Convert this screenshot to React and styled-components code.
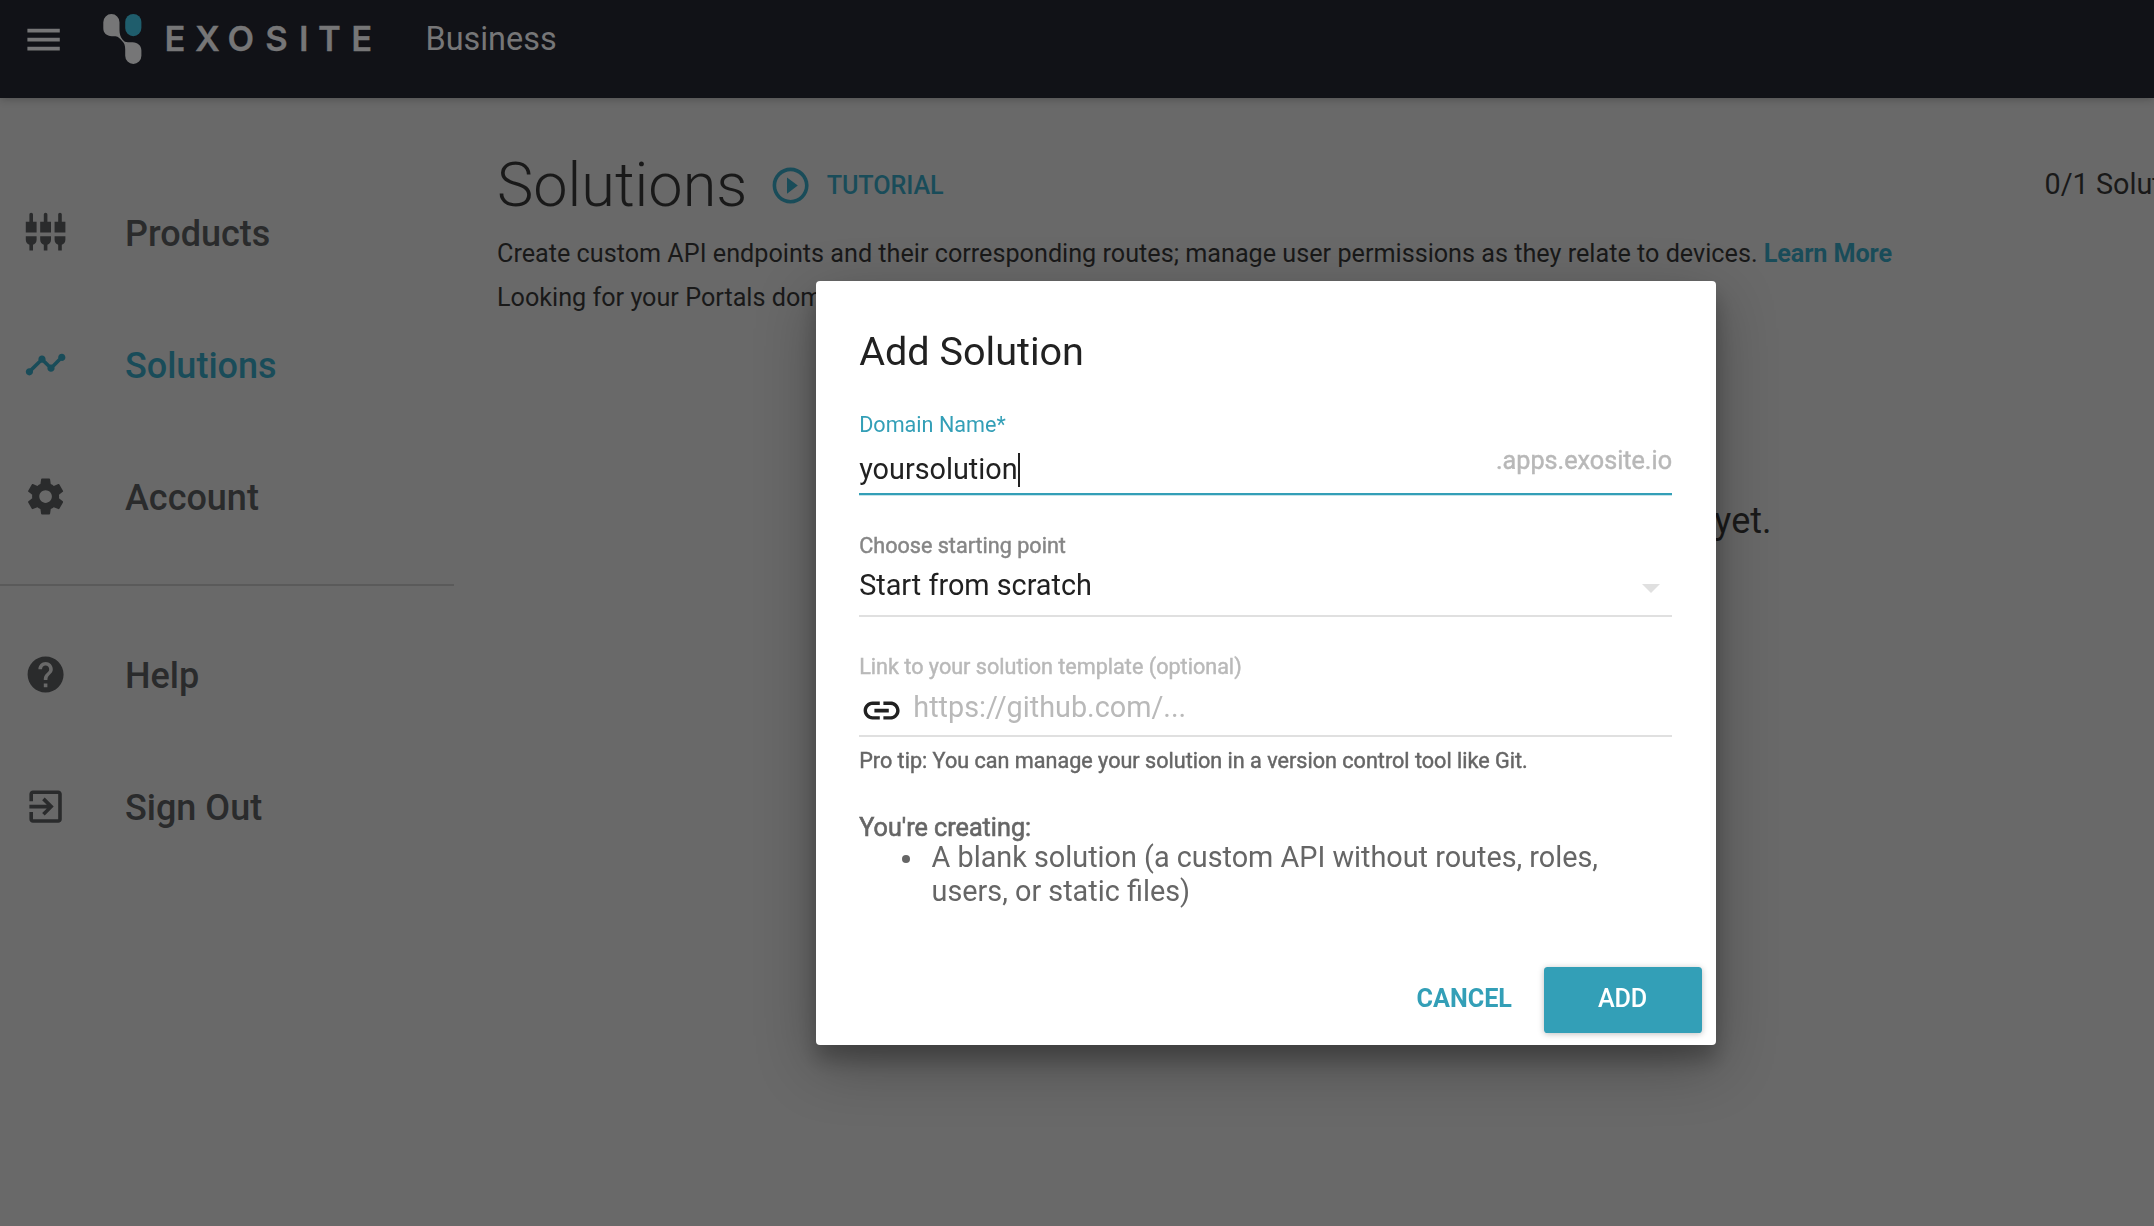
import React from 'react';
import styled, { createGlobalStyle } from 'styled-components';

const teal = '#339fb7';
const dimTeal = '#194c59';

const GlobalStyle = createGlobalStyle`
  * { box-sizing: border-box; }
  html, body { margin: 0; height: 100%; overflow: hidden; }
  body { background: #696969; font-family: Roboto, "Liberation Sans", sans-serif; }
  h1, h2, p, ul { margin: 0; padding: 0; font-weight: 400; }
`;

const Page = styled.div`
  height: 1226px;
  display: flex;
  flex-direction: column;
  overflow: hidden;
  background: #696969;
`;

const Header = styled.header`
  flex: none;
  height: 98px;
  padding: 0 0 18px 22px;
  display: flex;
  align-items: center;
  background: #111217;
  color: #767677;
  box-shadow: 0 0 9px rgba(0, 0, 0, 0.3);
`;

const Icon = styled.svg`
  flex: none;
  display: block;
  width: 43.2px;
  height: 43.2px;
  fill: currentColor;
`;

const Logo = styled.svg`
  flex: none;
  display: block;
  width: 272px;
  height: 52px;
  margin: -2px 0 0 37.8px;
  fill: currentColor;
  font: 600 34.6px Inter, "Liberation Sans", sans-serif;
`;

const Section = styled.span`
  margin-left: 50.5px;
  padding-bottom: 1.5px;
  font-size: 32.4px;
  line-height: 40px;
`;

const Body = styled.div`
  flex: 1;
  display: flex;
  min-height: 0;
`;

const Sidebar = styled.nav`
  flex: none;
  width: 454px;
  padding-top: 69px;
`;

const NavItem = styled.a`
  height: 132px;
  padding-left: 24.2px;
  display: flex;
  align-items: center;
  gap: 57.6px;
  font-size: 36px;
  font-weight: 500;
  line-height: 44px;
  color: ${(p) => (p.$active ? dimTeal : '#2a2b2c')};
`;

const NavLabel = styled.span`
  padding-top: 2px;
`;

const Divider = styled.div`
  height: 2px;
  margin: 21px 0 22.6px;
  background: #5a5a5a;
`;

const Main = styled.main`
  flex: 1;
  min-width: 0;
  padding: 47px 0 0 43px;
  color: #191919;
`;

const TitleRow = styled.div`
  height: 80px;
  display: flex;
  align-items: center;
`;

const Title = styled.h1`
  font-size: 61.2px;
  font-weight: 300;
  line-height: 80px;
`;

const Tutorial = styled.a`
  margin-left: 22px;
  padding-top: 2px;
  display: flex;
  align-items: center;
  gap: 14.2px;
  font-size: 25.2px;
  font-weight: 500;
  letter-spacing: -0.1px;
  line-height: 32px;
  color: ${dimTeal};
`;

const Usage = styled.span`
  margin-left: auto;
  width: 109.5px;
  overflow: hidden;
  white-space: nowrap;
  font-size: 28.8px;
  line-height: 36px;
  padding-bottom: 2px;
`;

const Intro = styled.div`
  margin-top: 7.4px;
  font-size: 25.2px;
  line-height: 44px;
  white-space: nowrap;
`;

const LearnMore = styled.a`
  font-weight: 700;
  letter-spacing: -0.1px;
  color: ${dimTeal};
`;

const Empty = styled.p`
  margin-top: 179px;
  padding-right: 382.5px;
  text-align: right;
  font-size: 36px;
  line-height: 44px;
`;

const Overlay = styled.div`
  position: fixed;
  inset: 0;
  padding: 281px 0 0 816px;
`;

const Dialog = styled.section`
  width: 900px;
  height: 764px;
  padding: 47px 44px 0 43.2px;
  border-radius: 4px;
  background: #fff;
  color: #212121;
  box-shadow: 0 19px 60px rgba(0, 0, 0, 0.3), 0 15px 20px rgba(0, 0, 0, 0.22);
`;

const DialogTitle = styled.h2`
  font-size: 39.6px;
  line-height: 48px;
`;

const Label = styled.div`
  margin-top: ${(p) => p.$top}px;
  font-size: 21.6px;
  line-height: 26px;
  color: ${(p) => p.$color};
  -webkit-text-stroke: ${(p) => (p.$heavy ? '0.45px' : '0')} currentColor;
`;

const Field = styled.div`
  height: ${(p) => p.$height}px;
  display: flex;
  align-items: flex-start;
  border-bottom: 2px solid ${(p) => (p.$focused ? teal : '#e0e0e0')};
  box-shadow: ${(p) => (p.$focused ? '0 1px 0 #c5e4eb' : 'none')};
  font-size: 28.8px;
  line-height: 34px;
`;

const Value = styled.span`
  flex: 1;
  display: flex;
  padding-top: ${(p) => p.$top}px;
  color: ${(p) => (p.$placeholder ? '#b9b9b9' : '#212121')};
`;

const Caret = styled.span`
  width: 2px;
  height: 34px;
  margin: 1px 0 0 0.5px;
  background: #212121;
`;

const Suffix = styled.span`
  padding-top: 8px;
  font-size: 25.2px;
  line-height: 30px;
  color: #b8b8b8;
  -webkit-text-stroke: 0.45px currentColor;
`;

const Arrow = styled.span`
  margin: 25px 12px 0 0;
  border: 9px solid transparent;
  border-top-color: #e0e0e0;
  border-bottom: 0;
`;

const LinkIcon = styled.span`
  margin: 8.6px 10.5px 0 0.4px;
`;

const Summary = styled.div`
  margin-top: 39px;
  color: #666;
  font-size: 25.2px;
  line-height: 30px;
`;

const SummaryHead = styled.div`
  -webkit-text-stroke: 0.6px currentColor;
`;

const SummaryItem = styled.div`
  margin-top: -3px;
  display: flex;
  gap: 22px;
  padding-left: 42.4px;
  font-size: 28.8px;
  line-height: 34px;
`;

const Bullet = styled.span`
  flex: none;
  width: 8px;
  height: 8px;
  margin-top: 15px;
  border-radius: 50%;
  background: #666;
`;

const Actions = styled.div`
  margin: 59px -30px 0 0;
  display: flex;
  justify-content: flex-end;
`;

const Button = styled.button`
  height: 66px;
  width: ${(p) => (p.$primary ? '158px' : 'auto')};
  padding: 0 ${(p) => (p.$primary ? '1px' : '32px')} 2px 0;
  border: 0;
  border-radius: 3.6px;
  font: ${(p) => (p.$primary ? 500 : 700)} 25.2px/32px Roboto, "Liberation Sans", sans-serif;
  letter-spacing: ${(p) => (p.$primary ? '-0.2px' : '0')};
  color: ${(p) => (p.$primary ? '#fff' : teal)};
  background: ${(p) => (p.$primary ? teal : 'transparent')};
  box-shadow: ${(p) => (p.$primary ? '0 1px 6px rgba(0, 0, 0, 0.26)' : 'none')};
`;

const paths = {
  menu: 'M3 18h18v-2H3v2zm0-5h18v-2H3v2zm0-7v2h18V6H3z',
  products:
    'M5 2c0-.55-.45-1-1-1s-1 .45-1 1v4H1v6h6V6H5V2zm4 14c0 1.3.84 2.4 2 2.82V22h2v-3.18c1.16-.41 2-1.51 2-2.82v-2H9v2zm-8 0c0 1.3.84 2.4 2 2.82V22h2v-3.18C6.16 18.4 7 17.3 7 16v-2H1v2zM21 6V2c0-.55-.45-1-1-1s-1 .45-1 1v4h-2v6h6V6h-2zm-8-4c0-.55-.45-1-1-1s-1 .45-1 1v4H9v6h6V6h-2V2zm4 14c0 1.3.84 2.4 2 2.82V22h2v-3.18c1.16-.41 2-1.51 2-2.82v-2h-6v2z',
  solutions:
    'M23 8c0 1.1-.9 2-2 2-.18 0-.35-.02-.51-.07l-3.56 3.55c.05.16.07.34.07.52 0 1.1-.9 2-2 2s-2-.9-2-2c0-.18.02-.36.07-.52l-2.55-2.55c-.16.05-.34.07-.52.07s-.36-.02-.52-.07l-4.55 4.56c.05.16.07.33.07.51 0 1.1-.9 2-2 2s-2-.9-2-2 .9-2 2-2c.18 0 .35.02.51.07l4.56-4.55C8.02 9.36 8 9.18 8 9c0-1.1.9-2 2-2s2 .9 2 2c0 .18-.02.36-.07.52l2.55 2.55c.16-.05.34-.07.52-.07s.36.02.52.07l3.55-3.56C19.02 8.35 19 8.18 19 8c0-1.1.9-2 2-2s2 .9 2 2z',
  account:
    'M19.43 12.98c.04-.32.07-.64.07-.98s-.03-.66-.07-.98l2.11-1.65c.19-.15.24-.42.12-.64l-2-3.46c-.12-.22-.39-.3-.61-.22l-2.49 1c-.52-.4-1.08-.73-1.69-.98l-.38-2.65C14.46 2.18 14.25 2 14 2h-4c-.25 0-.46.18-.49.42l-.38 2.65c-.61.25-1.17.59-1.69.98l-2.49-1c-.23-.09-.49 0-.61.22l-2 3.46c-.13.22-.07.49.12.64l2.11 1.65c-.04.32-.07.65-.07.98s.03.66.07.98l-2.11 1.65c-.19.15-.24.42-.12.64l2 3.46c.12.22.39.3.61.22l2.49-1c.52.4 1.08.73 1.69.98l.38 2.65c.03.24.24.42.49.42h4c.25 0 .46-.18.49-.42l.38-2.65c.61-.25 1.17-.59 1.69-.98l2.49 1c.23.09.49 0 .61-.22l2-3.46c.12-.22.07-.49-.12-.64l-2.11-1.65zM12 15.5c-1.93 0-3.5-1.57-3.5-3.5s1.57-3.5 3.5-3.5 3.5 1.57 3.5 3.5-1.57 3.5-3.5 3.5z',
  help: 'M12 2C6.48 2 2 6.48 2 12s4.48 10 10 10 10-4.48 10-10S17.52 2 12 2zm1 17h-2v-2h2v2zm2.07-7.75l-.9.92C13.45 12.9 13 13.5 13 15h-2v-.5c0-1.1.45-2.1 1.17-2.83l1.24-1.26c.37-.36.59-.86.59-1.41 0-1.1-.9-2-2-2s-2 .9-2 2H8c0-2.21 1.79-4 4-4s4 1.79 4 4c0 .88-.36 1.68-.93 2.25z',
  signOut:
    'M10.09 15.59L11.5 17l5-5-5-5-1.41 1.41L12.67 11H3v2h9.67l-2.58 2.59zM19 3H5c-1.11 0-2 .9-2 2v4h2V5h14v14H5v-4H3v4c0 1.1.89 2 2 2h14c1.1 0 2-.9 2-2V5c0-1.1-.9-2-2-2z',
  play: 'M10 16.5l6-4.5-6-4.5v9zM12 2C6.48 2 2 6.48 2 12s4.48 10 10 10 10-4.48 10-10S17.52 2 12 2zm0 18c-4.41 0-8-3.59-8-8s3.59-8 8-8 8 3.59 8 8-3.59 8-8 8z',
  link: 'M3.9 12c0-1.71 1.39-3.1 3.1-3.1h4V7H7c-2.76 0-5 2.24-5 5s2.24 5 5 5h4v-1.9H7c-1.71 0-3.1-1.39-3.1-3.1zM8 13h8v-2H8v2zm9-6h-4v1.9h4c1.71 0 3.1 1.39 3.1 3.1s-1.39 3.1-3.1 3.1h-4V17h4c2.76 0 5-2.24 5-5s-2.24-5-5-5z',
};

const Glyph = ({ name }) => (
  <Icon viewBox="0 0 24 24" aria-hidden="true">
    <path d={paths[name]} />
  </Icon>
);

const primaryNav = [
  { icon: 'products', label: 'Products' },
  { icon: 'solutions', label: 'Solutions', active: true },
  { icon: 'account', label: 'Account' },
];
const secondaryNav = [
  { icon: 'help', label: 'Help' },
  { icon: 'signOut', label: 'Sign Out' },
];

const NavList = ({ items }) =>
  items.map((item) => (
    <NavItem key={item.label} $active={item.active}>
      <Glyph name={item.icon} />
      <NavLabel>{item.label}</NavLabel>
    </NavItem>
  ));

export default function App() {
  return (
    <>
      <GlobalStyle />
      <Page>
        <Header>
          <Glyph name="menu" />
          <Logo viewBox="103 13 272 52">
            <path d="M103.3 22.2a8.100 8.100 0 0 1 16.200 0v8.300c0 3.500 1.100 6.500 3.200 9.300c1.300 1.700 2.800 2.500 5.300 2.500h4.500c5.500 0 8.900 3.600 8.900 8.200v5.300a8.100 8.100 0 0 1-16.200 0v-6.500c0-3.800-.9-6.200-2.900-8.100c-2-2.300-3.900-4.700-6.800-5h-3.700c-5.200 0-8.500-3.400-8.500-7.900z" />
            <rect x="125.2" y="14" width="16.2" height="22.2" rx="8.1" fill="#1f5d6c" />
            <text
              x="174.9 207.4 240.7 276.5 303.8 329.4 361.6"
              y="50.5"
              textAnchor="middle"
              stroke="currentColor"
              strokeWidth="0.3"
            >
              EXOSITE
            </text>
          </Logo>
          <Section>Business</Section>
        </Header>
        <Body>
          <Sidebar>
            <NavList items={primaryNav} />
            <Divider />
            <NavList items={secondaryNav} />
          </Sidebar>
          <Main>
            <TitleRow>
              <Title>Solutions</Title>
              <Tutorial>
                <Glyph name="play" />
                TUTORIAL
              </Tutorial>
              <Usage>0/1 Solutions</Usage>
            </TitleRow>
            <Intro>
              <p>
                Create custom API endpoints and their corresponding routes; manage user permissions as they relate to
                devices. <LearnMore>Learn More</LearnMore>
              </p>
              <p>Looking for your Portals domain?</p>
            </Intro>
            <Empty>yet.</Empty>
          </Main>
        </Body>
      </Page>
      <Overlay>
        <Dialog role="dialog">
          <DialogTitle>Add Solution</DialogTitle>
          <Label $top={36} $color={teal}>Domain Name*</Label>
          <Field $focused $height={57}>
            <Value $top={14}>
              yoursolution
              <Caret />
            </Value>
            <Suffix>.apps.exosite.io</Suffix>
          </Field>
          <Label $top={38} $color="#868686" $heavy>Choose starting point</Label>
          <Field $height={58}>
            <Value $top={9}>Start from scratch</Value>
            <Arrow />
          </Field>
          <Label $top={37} $color="#b9b9b9" $heavy>Link to your solution template (optional)</Label>
          <Field $height={57}>
            <LinkIcon>
              <Glyph name="link" />
            </LinkIcon>
            <Value $top={10} $placeholder>https://github.com/...</Value>
          </Field>
          <Label $top={11} $color="#666" $heavy>
            Pro tip: You can manage your solution in a version control tool like Git.
          </Label>
          <Summary>
            <SummaryHead>You're creating:</SummaryHead>
            <SummaryItem>
              <Bullet />
              <span>A blank solution (a custom API without routes, roles, users, or static files)</span>
            </SummaryItem>
          </Summary>
          <Actions>
            <Button>CANCEL</Button>
            <Button $primary>ADD</Button>
          </Actions>
        </Dialog>
      </Overlay>
    </>
  );
}
